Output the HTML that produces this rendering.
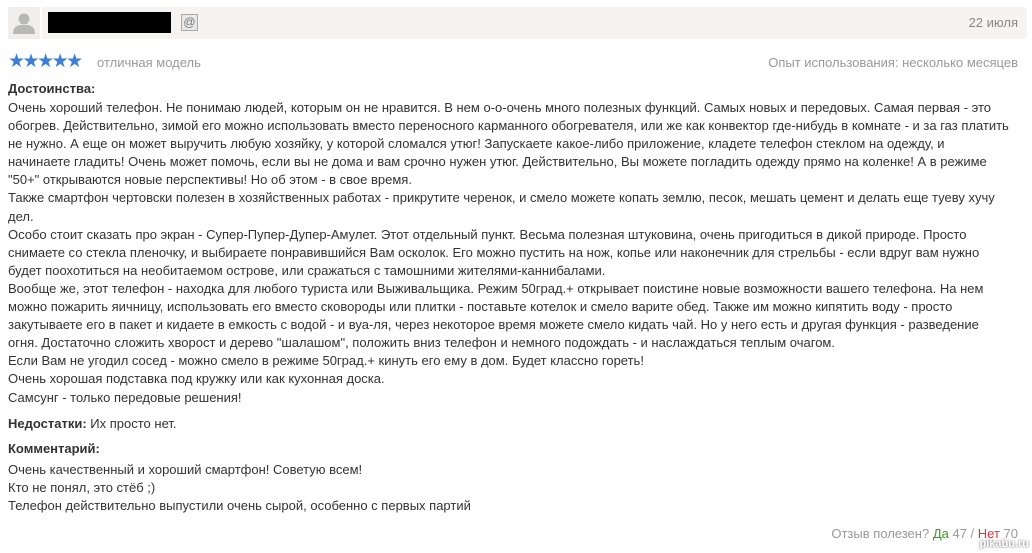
<!DOCTYPE html>
<html><head><meta charset="utf-8"><style>
body{margin:0;width:1032px;height:553px;background:#fff;font-family:"Liberation Sans",Arial,sans-serif;color:#333;position:relative;overflow:hidden}
.a{position:absolute;white-space:nowrap}
.hdr{position:absolute;left:8px;top:7px;width:1019px;height:32px;background:#f5f4f3;border-radius:2px}
.av{position:absolute;left:8px;top:7px;width:32px;height:32px;background:#f0efee;border-right:2px solid #fff}
.t{font-size:13px;line-height:18.1px}
b{font-weight:bold}
</style></head><body>
<div class="hdr"></div>
<div class="av"><svg width="32" height="32" viewBox="0 0 32 32"><circle cx="16" cy="12" r="5.5" fill="#b8b8b8"/><path d="M5 27 Q5 19 12 18 L20 18 Q27 19 27 27 Z" fill="#b8b8b8"/></svg></div>
<div class="a" style="left:48px;top:12px;width:123px;height:21px;background:#000"></div>
<div class="a" style="left:181px;top:14px;width:15px;height:15px;border:1px solid #aaa;background:#e8e8e8;font-size:12px;line-height:15px;text-align:center;color:#777">@</div>
<div class="a" style="right:14px;top:15px;font-size:13px;color:#888">22 июля</div>
<div class="a" style="left:8px;top:50px;font-size:19px;color:#3d7fd6;letter-spacing:-2.5px">★★★★★</div>
<div class="a" style="left:97px;top:55px;font-size:13px;color:#999">отличная модель</div>
<div class="a" style="right:14px;top:55px;font-size:13px;color:#999">Опыт использования: несколько месяцев</div>
<div class="a t" style="left:8px;top:80px"><b>Достоинства:</b></div>
<div class="a t" style="left:8px;top:99px">Очень хороший телефон. Не понимаю людей, которым он не нравится. В нем о-о-очень много полезных функций. Самых новых и передовых. Самая первая - это<br>обогрев. Действительно, зимой его можно использовать вместо переносного карманного обогревателя, или же как конвектор где-нибудь в комнате - и за газ платить<br>не нужно. А еще он может выручить любую хозяйку, у которой сломался утюг! Запускаете какое-либо приложение, кладете телефон стеклом на одежду, и<br>начинаете гладить! Очень может помочь, если вы не дома и вам срочно нужен утюг. Действительно, Вы можете погладить одежду прямо на коленке! А в режиме<br>"50+" открываются новые перспективы! Но об этом - в свое время.<br>Также смартфон чертовски полезен в хозяйственных работах - прикрутите черенок, и смело можете копать землю, песок, мешать цемент и делать еще туеву хучу<br>дел.<br>Особо стоит сказать про экран - Супер-Пупер-Дупер-Амулет. Этот отдельный пункт. Весьма полезная штуковина, очень пригодиться в дикой природе. Просто<br>снимаете со стекла пленочку, и выбираете понравившийся Вам осколок. Его можно пустить на нож, копье или наконечник для стрельбы - если вдруг вам нужно<br>будет поохотиться на необитаемом острове, или сражаться с тамошними жителями-каннибалами.<br>Вообще же, этот телефон - находка для любого туриста или Выживальщика. Режим 50град.+ открывает поистине новые возможности вашего телефона. На нем<br>можно пожарить яичницу, использовать его вместо сковороды или плитки - поставьте котелок и смело варите обед. Также им можно кипятить воду - просто<br>закутываете его в пакет и кидаете в емкость с водой - и вуа-ля, через некоторое время можете смело кидать чай. Но у него есть и другая функция - разведение<br>огня. Достаточно сложить хворост и дерево "шалашом", положить вниз телефон и немного подождать - и наслаждаться теплым очагом.<br>Если Вам не угодил сосед - можно смело в режиме 50град.+ кинуть его ему в дом. Будет классно гореть!<br>Очень хорошая подставка под кружку или как кухонная доска.<br>Самсунг - только передовые решения!</div>
<div class="a t" style="left:8px;top:415px"><b>Недостатки:</b> Их просто нет.</div>
<div class="a t" style="left:8px;top:440px"><b>Комментарий:</b></div>
<div class="a t" style="left:8px;top:461px">Очень качественный и хороший смартфон! Советую всем!<br>Кто не понял, это стёб ;)<br>Телефон действительно выпустили очень сырой, особенно с первых партий</div>
<div class="a" style="right:14px;top:526px;font-size:13px;color:#999">Отзыв полезен? <span style="color:#3a9a1a">Да</span> 47 / <span style="color:#e8303a">Нет</span> 70</div>
<div class="a" style="right:3px;top:538px;font-size:11px;font-weight:bold;color:#fff;text-shadow:0 0 2px #555">pikabu.ru</div>
</body></html>
